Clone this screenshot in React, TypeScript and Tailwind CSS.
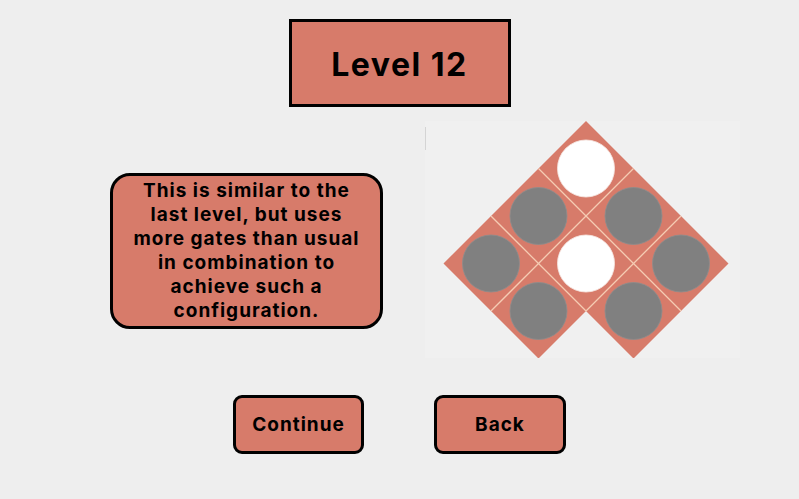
import React from "react";

const S = 67.18;
const CELLS: [number, number, boolean][] = [
  [0, 0, true],
  [0, 1, false],
  [0, 2, false],
  [1, 0, false],
  [1, 1, true],
  [1, 2, false],
  [2, 0, false],
  [2, 1, false],
];

const HINT = [
  "This is similar to the",
  "last level, but uses",
  "more gates than usual",
  "in combination to",
  "achieve such a",
  "configuration.",
];

function Board() {
  return (
    <div className="h-[237px] w-[315px] bg-[#f0f0f0]">
      <svg width="315" height="237" viewBox="0 0 315 237">
        <line x1="0.5" y1="6" x2="0.5" y2="29" stroke="#d4d4d4" strokeWidth="1" />
        <g transform="translate(161 0) rotate(45)">
          <polygon
            points={`0,0 ${3 * S},0 ${3 * S},${2 * S} ${2 * S},${2 * S} ${2 * S},${3 * S} 0,${3 * S}`}
            fill="#d77b6a"
          />
          <line x1={S} y1={0} x2={S} y2={3 * S} stroke="#f5ccb3" strokeWidth="1.3" />
          <line x1={2 * S} y1={0} x2={2 * S} y2={2 * S} stroke="#f5ccb3" strokeWidth="1.3" />
          <line x1={0} y1={S} x2={3 * S} y2={S} stroke="#f5ccb3" strokeWidth="1.3" />
          <line x1={0} y1={2 * S} x2={2 * S} y2={2 * S} stroke="#f5ccb3" strokeWidth="1.3" />
          {CELLS.map(([i, j, on]) => (
            <circle
              key={`${i}-${j}`}
              cx={(j + 0.5) * S}
              cy={(i + 0.5) * S}
              r={28.5}
              fill={on ? "#ffffff" : "#808080"}
              stroke={on ? "#f5e6e2" : "#8c8c8c"}
              strokeWidth="0.8"
            />
          ))}
        </g>
      </svg>
    </div>
  );
}

export default function App() {
  return (
    <div
      className="flex h-[499px] w-[799px] flex-col items-center bg-[#eeeeee] text-black"
      style={{ fontFamily: "Inter, 'Noto Sans', sans-serif" }}
    >
      {/* Title */}
      <div className="mt-[19px] flex h-[88px] w-[222px] items-center justify-center border-[3px] border-black bg-[#d77b6a] pt-[3px]">
        <span className="text-[32px] font-bold tracking-[1.5px]">Level 12</span>
      </div>

      {/* Hint + board */}
      <div className="mt-[14px] flex w-full items-start pl-[110px]">
        <div className="mt-[52px] flex h-[156px] w-[273px] flex-col items-center justify-center rounded-[20px] border-[3px] border-black bg-[#d77b6a]">
          {HINT.map((line) => (
            <p key={line} className="text-center text-[19px] leading-[24px] font-bold tracking-[1px] whitespace-nowrap">
              {line}
            </p>
          ))}
        </div>
        <div className="ml-[42px]">
          <Board />
        </div>
      </div>

      {/* Buttons */}
      <div className="mt-[37px] flex gap-[70px]">
        <button className="flex h-[59px] w-[131px] items-center justify-center rounded-[9px] border-[3px] border-black bg-[#d77b6a] pt-[2px] text-[19px] font-bold tracking-[1px]">
          Continue
        </button>
        <button className="flex h-[59px] w-[132px] items-center justify-center rounded-[9px] border-[3px] border-black bg-[#d77b6a] pt-[2px] text-[19px] font-bold tracking-[1px]">
          Back
        </button>
      </div>
    </div>
  );
}
